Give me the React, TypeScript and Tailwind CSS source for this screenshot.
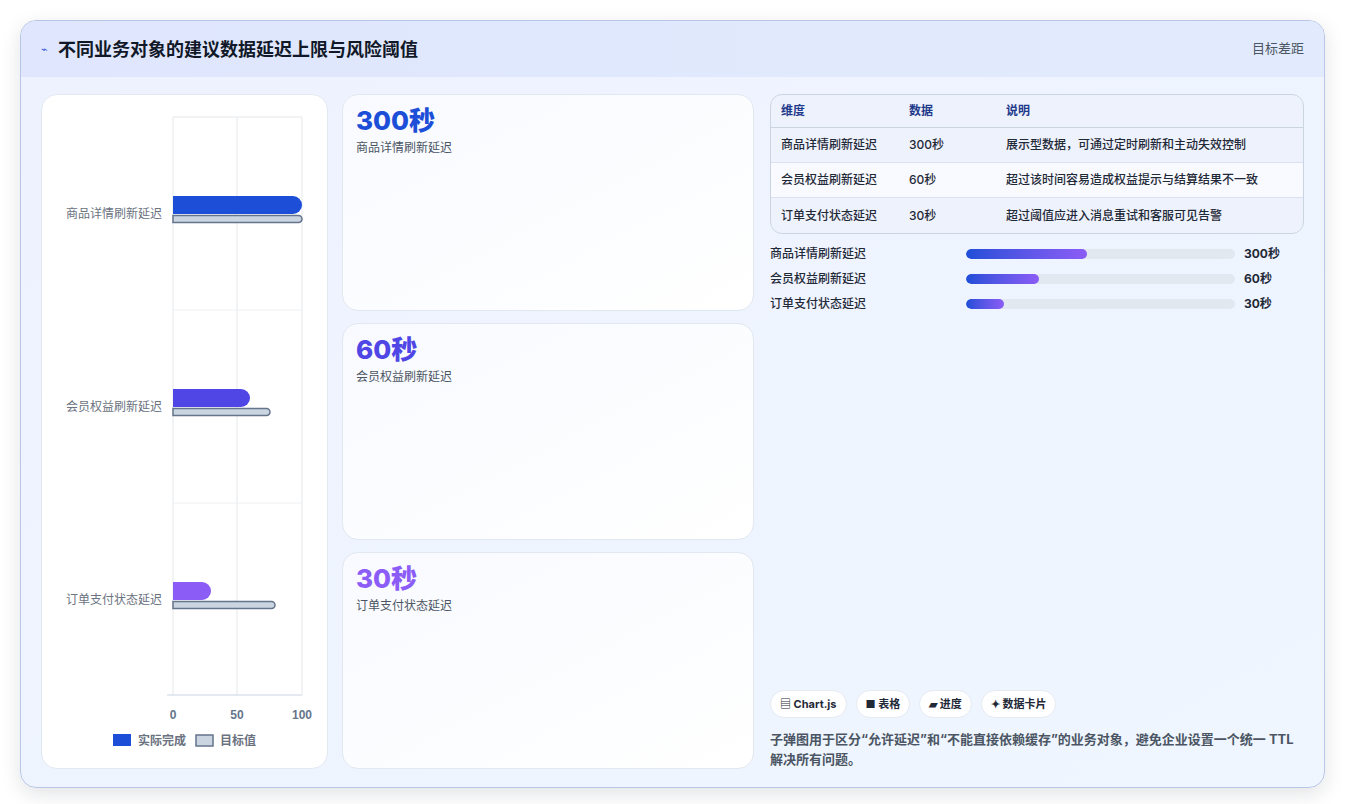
import React from "react";

const rows = [
  { n: "商品详情刷新延迟", v: "300秒", d: "展示型数据，可通过定时刷新和主动失效控制", p: 45 },
  { n: "会员权益刷新延迟", v: "60秒", d: "超过该时间容易造成权益提示与结算结果不一致", p: 27 },
  { n: "订单支付状态延迟", v: "30秒", d: "超过阈值应进入消息重试和客服可见告警", p: 14 },
];

function Chart() {
  const bars = [
    { a: 129, t: 129, c: "#1d4ed8" },
    { a: 77, t: 97, c: "#4f46e5" },
    { a: 38, t: 102, c: "#8b5cf6" },
  ];
  return (
    <svg width="286" height="675" viewBox="0 0 286 675" className="block">
      {[131, 195, 260].map((x) => (
        <line key={x} x1={x} y1={22} x2={x} y2={600} stroke="#e5e7eb" />
      ))}
      <line x1={131} y1={22} x2={260} y2={22} stroke="#e5e7eb" />
      {[215, 408].map((y) => (
        <line key={y} x1={131} y1={y} x2={260} y2={y} stroke="#eef0f3" />
      ))}
      <line x1={125} y1={600} x2={260} y2={600} stroke="#cbd5e1" />
      {bars.map((b, i) => {
        const top = 101 + i * 193;
        return (
          <g key={i}>
            <text x={120} y={top + 22} textAnchor="end" fontSize="12" fill="#6b7280" fontFamily="Noto Sans CJK SC, sans-serif">{rows[i].n}</text>
            <path d={`M131 ${top + 19.5} H${131 + b.t - 3.5} a3.5 3.5 0 0 1 0 7 H131 Z`} fill="#cbd5e1" stroke="#64748b" strokeWidth="1.5" />
            <path d={`M131 ${top} H${131 + b.a - 9} a9 9 0 0 1 0 18 H131 Z`} fill={b.c} />
          </g>
        );
      })}
      {[[131, "0"], [195, "50"], [260, "100"]].map(([x, t]) => (
        <text key={t as string} x={x as number} y={624} textAnchor="middle" fontSize="12" fontWeight="bold" fill="#64748b" fontFamily="Liberation Sans, sans-serif">{t}</text>
      ))}
      <rect x={71} y={639} width={18} height={12} fill="#1d4ed8" />
      <text x={96} y={650} fontSize="12" fontWeight="bold" fill="#6b7280" fontFamily="Noto Sans CJK SC, sans-serif">实际完成</text>
      <rect x={154} y={640} width={17} height={11} fill="#cbd5e1" stroke="#64748b" strokeWidth="1.5" />
      <text x={178} y={650} fontSize="12" fontWeight="bold" fill="#6b7280" fontFamily="Noto Sans CJK SC, sans-serif">目标值</text>
    </svg>
  );
}

export default function App() {
  const cards = [
    { v: "300秒", c: "text-[#1d4ed8]" },
    { v: "60秒", c: "text-[#4f46e5]" },
    { v: "30秒", c: "text-[#8b5cf6]" },
  ];
  return (
    <div className="w-[1345px] h-[804px] bg-white p-5 pb-4" style={{ fontFamily: "Inter, 'Noto Sans CJK SC', sans-serif" }}>
      <div className="h-full rounded-2xl border border-[#b9c6e6] bg-gradient-to-br from-[#eef2ff] to-[#eff6ff] shadow-[0_6px_20px_rgba(15,23,42,0.12)] overflow-hidden flex flex-col">
        <div className="h-[56px] shrink-0 flex items-center justify-between px-5 bg-gradient-to-r from-[#dfe6fd] to-[#e2ebfd]">
          <div className="flex items-center gap-[10px]">
            <span className="text-[#3b5bdb] text-[11px]">⌁</span>
            <span className="text-[18px] font-bold text-[#111827]">不同业务对象的建议数据延迟上限与风险阈值</span>
          </div>
          <span className="text-[13px] text-[#4b5563]">目标差距</span>
        </div>
        <div className="flex-1 flex gap-[14px] px-5 pt-[17px] pb-[18px] min-h-0">
          <div className="w-[287px] shrink-0 bg-white rounded-2xl border border-[#e2e8f0]">
            <Chart />
          </div>
          <div className="w-[412px] shrink-0 flex flex-col gap-3">
            {cards.map((c, i) => (
              <div key={i} className="flex-1 rounded-2xl border border-[#e2e8f0] bg-gradient-to-br from-[#f8faff] to-white px-[13px] pt-[9px]">
                <div className={`text-[26px] font-extrabold leading-[34px] ${c.c}`}>{c.v}</div>
                <div className="text-[12px] text-[#4b5563] mt-[1px]">{rows[i].n}</div>
              </div>
            ))}
          </div>
          <div className="flex-1 flex flex-col ml-[2px]">
            <div className="rounded-xl border border-[#cbd5e1] overflow-hidden bg-[#eef2fd]">
              <div className="flex h-[33px] items-center text-[12px] font-bold text-[#1e3a8a] px-[10px] border-b border-[#cbd5e1]">
                <div className="w-[128px]">维度</div><div className="w-[97px]">数据</div><div>说明</div>
              </div>
              {rows.map((r, i) => (
                <div key={i} className={`flex h-[35px] items-center text-[12px] font-medium text-[#1f2937] px-[10px] ${i < 2 ? "border-b border-[#dbe2ee]" : ""} ${i === 1 ? "bg-[#f8faff]" : ""}`}>
                  <div className="w-[128px]">{r.n}</div><div className="w-[97px]">{r.v}</div><div>{r.d}</div>
                </div>
              ))}
            </div>
            <div className="mt-[11px] flex flex-col gap-[7px]">
              {rows.map((r, i) => (
                <div key={i} className="flex items-center h-[18px] text-[12px] font-medium text-[#1f2937]">
                  <div className="w-[196px]">{r.n}</div>
                  <div className="w-[269px] h-[10px] rounded-full bg-[#e2e8f0] overflow-hidden">
                    <div className="h-full rounded-full bg-gradient-to-r from-[#1d4ed8] to-[#8b5cf6]" style={{ width: `${r.p}%` }} />
                  </div>
                  <div className="ml-[9px] font-bold">{r.v}</div>
                </div>
              ))}
            </div>
            <div className="mt-auto flex gap-[9px]">
              {["▤ Chart.js", "■ 表格", "▰ 进度", "✦ 数据卡片"].map((t) => (
                <span key={t} className="h-[28px] px-[9px] flex items-center rounded-full bg-white border border-[#e5eaf3] text-[11px] font-bold text-[#1f2937]">{t}</span>
              ))}
            </div>
            <p className="mt-[11px] text-[13px] leading-[20px] font-bold text-[#4b5563]">子弹图用于区分“允许延迟”和“不能直接依赖缓存”的业务对象，避免企业设置一个统一 TTL 解决所有问题。</p>
          </div>
        </div>
      </div>
    </div>
  );
}
